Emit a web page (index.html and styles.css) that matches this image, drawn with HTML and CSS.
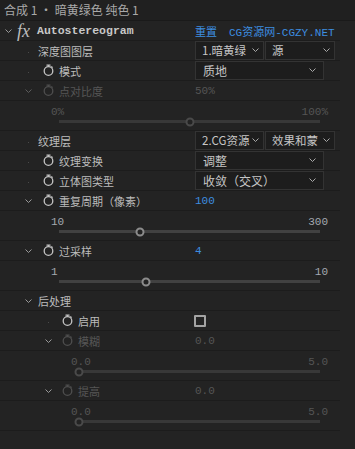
FILE: index.html
```html
<!DOCTYPE html>
<html>
<head>
<meta charset="utf-8">
<link rel="stylesheet" href="styles.css">
</head>
<body>
<div class="panel">
  <div class="header">合成 1 • 暗黄绿色 纯色 1</div>
  <div class="body">
    <div class="rows">
      <div class="row">
        <div class="label l0">
          <span class="tw"><svg width="7" height="4" viewBox="0 0 7 4"><path d="M0.5 0.5 L3.5 3.5 L6.5 0.5" fill="none" stroke="#9a9a9a" stroke-width="1"/></svg></span>
          <span class="fx">fx</span>
          <span class="effname">Autostereogram</span>
        </div>
        <div class="value">
          <span class="link">重置</span>
          <span class="link site">CG资源网-CGZY.NET</span>
        </div>
      </div>

      <div class="row">
        <div class="label l1">
          <span class="tw"><i class="dot"></i></span>
          <span class="txt ns">深度图图层</span>
        </div>
        <div class="value">
          <div class="dd half"><span class="ddt">1.暗黄绿</span><svg class="ddc" width="7" height="4" viewBox="0 0 7 4"><path d="M0.5 0.5 L3.5 3.5 L6.5 0.5" fill="none" stroke="#a8a8a8" stroke-width="1"/></svg></div>
          <div class="dd half"><span class="ddt">源</span><svg class="ddc" width="7" height="4" viewBox="0 0 7 4"><path d="M0.5 0.5 L3.5 3.5 L6.5 0.5" fill="none" stroke="#a8a8a8" stroke-width="1"/></svg></div>
        </div>
      </div>

      <div class="row">
        <div class="label l1">
          <span class="tw"><i class="dot"></i></span>
          <svg class="sw" width="11" height="12" viewBox="0 0 11 12"><circle cx="5.5" cy="7" r="4.3" fill="none" stroke="#c4c4c4" stroke-width="1.3"/><path d="M3.5 1.2 H7.5 M5.5 1.2 V2.6 M8.4 2.4 L9.6 3.6" fill="none" stroke="#c4c4c4" stroke-width="1.2"/></svg>
          <span class="txt">模式</span>
        </div>
        <div class="value">
          <div class="dd full"><span class="ddt">质地</span><svg class="ddc" width="7" height="4" viewBox="0 0 7 4"><path d="M0.5 0.5 L3.5 3.5 L6.5 0.5" fill="none" stroke="#a8a8a8" stroke-width="1"/></svg></div>
        </div>
      </div>

      <div class="row dis">
        <div class="label l1">
          <span class="tw"><svg width="7" height="4" viewBox="0 0 7 4"><path d="M0.5 0.5 L3.5 3.5 L6.5 0.5" fill="none" stroke="#5c5c5c" stroke-width="1"/></svg></span>
          <svg class="sw" width="11" height="12" viewBox="0 0 11 12"><circle cx="5.5" cy="7" r="4.3" fill="none" stroke="#4e4e4e" stroke-width="1.3"/><path d="M3.5 1.2 H7.5 M5.5 1.2 V2.6 M8.4 2.4 L9.6 3.6" fill="none" stroke="#4e4e4e" stroke-width="1.2"/></svg>
          <span class="txt">点对比度</span>
        </div>
        <div class="value"><span class="num">50%</span></div>
      </div>
      <div class="slider s1 dis">
        <div class="sl-labels"><span>0%</span><span>100%</span></div>
        <div class="track"><i class="knob" style="left:50%"></i></div>
      </div>

      <div class="row">
        <div class="label l1">
          <span class="tw"><i class="dot"></i></span>
          <span class="txt ns">纹理层</span>
        </div>
        <div class="value">
          <div class="dd half"><span class="ddt">2.CG资源</span><svg class="ddc" width="7" height="4" viewBox="0 0 7 4"><path d="M0.5 0.5 L3.5 3.5 L6.5 0.5" fill="none" stroke="#a8a8a8" stroke-width="1"/></svg></div>
          <div class="dd half"><span class="ddt">效果和蒙</span><svg class="ddc" width="7" height="4" viewBox="0 0 7 4"><path d="M0.5 0.5 L3.5 3.5 L6.5 0.5" fill="none" stroke="#a8a8a8" stroke-width="1"/></svg></div>
        </div>
      </div>

      <div class="row">
        <div class="label l1">
          <span class="tw"><i class="dot"></i></span>
          <svg class="sw" width="11" height="12" viewBox="0 0 11 12"><circle cx="5.5" cy="7" r="4.3" fill="none" stroke="#c4c4c4" stroke-width="1.3"/><path d="M3.5 1.2 H7.5 M5.5 1.2 V2.6 M8.4 2.4 L9.6 3.6" fill="none" stroke="#c4c4c4" stroke-width="1.2"/></svg>
          <span class="txt">纹理变换</span>
        </div>
        <div class="value">
          <div class="dd full"><span class="ddt">调整</span><svg class="ddc" width="7" height="4" viewBox="0 0 7 4"><path d="M0.5 0.5 L3.5 3.5 L6.5 0.5" fill="none" stroke="#a8a8a8" stroke-width="1"/></svg></div>
        </div>
      </div>

      <div class="row">
        <div class="label l1">
          <span class="tw"><i class="dot"></i></span>
          <svg class="sw" width="11" height="12" viewBox="0 0 11 12"><circle cx="5.5" cy="7" r="4.3" fill="none" stroke="#c4c4c4" stroke-width="1.3"/><path d="M3.5 1.2 H7.5 M5.5 1.2 V2.6 M8.4 2.4 L9.6 3.6" fill="none" stroke="#c4c4c4" stroke-width="1.2"/></svg>
          <span class="txt">立体图类型</span>
        </div>
        <div class="value">
          <div class="dd full"><span class="ddt">收敛（交叉）</span><svg class="ddc" width="7" height="4" viewBox="0 0 7 4"><path d="M0.5 0.5 L3.5 3.5 L6.5 0.5" fill="none" stroke="#a8a8a8" stroke-width="1"/></svg></div>
        </div>
      </div>

      <div class="row">
        <div class="label l1">
          <span class="tw"><svg width="7" height="4" viewBox="0 0 7 4"><path d="M0.5 0.5 L3.5 3.5 L6.5 0.5" fill="none" stroke="#9a9a9a" stroke-width="1"/></svg></span>
          <svg class="sw" width="11" height="12" viewBox="0 0 11 12"><circle cx="5.5" cy="7" r="4.3" fill="none" stroke="#c4c4c4" stroke-width="1.3"/><path d="M3.5 1.2 H7.5 M5.5 1.2 V2.6 M8.4 2.4 L9.6 3.6" fill="none" stroke="#c4c4c4" stroke-width="1.2"/></svg>
          <span class="txt">重复周期（像素）</span>
        </div>
        <div class="value"><span class="num blue">100</span></div>
      </div>
      <div class="slider s1">
        <div class="sl-labels"><span>10</span><span>300</span></div>
        <div class="track"><i class="knob" style="left:31%"></i></div>
      </div>

      <div class="row">
        <div class="label l1">
          <span class="tw"><svg width="7" height="4" viewBox="0 0 7 4"><path d="M0.5 0.5 L3.5 3.5 L6.5 0.5" fill="none" stroke="#9a9a9a" stroke-width="1"/></svg></span>
          <svg class="sw" width="11" height="12" viewBox="0 0 11 12"><circle cx="5.5" cy="7" r="4.3" fill="none" stroke="#c4c4c4" stroke-width="1.3"/><path d="M3.5 1.2 H7.5 M5.5 1.2 V2.6 M8.4 2.4 L9.6 3.6" fill="none" stroke="#c4c4c4" stroke-width="1.2"/></svg>
          <span class="txt">过采样</span>
        </div>
        <div class="value"><span class="num blue">4</span></div>
      </div>
      <div class="slider s1">
        <div class="sl-labels"><span>1</span><span>10</span></div>
        <div class="track"><i class="knob" style="left:33.3%"></i></div>
      </div>

      <div class="row">
        <div class="label l1">
          <span class="tw"><svg width="7" height="4" viewBox="0 0 7 4"><path d="M0.5 0.5 L3.5 3.5 L6.5 0.5" fill="none" stroke="#9a9a9a" stroke-width="1"/></svg></span>
          <span class="txt ns">后处理</span>
        </div>
        <div class="value"></div>
      </div>

      <div class="row">
        <div class="label l2">
          <span class="tw"><i class="dot"></i></span>
          <svg class="sw" width="11" height="12" viewBox="0 0 11 12"><circle cx="5.5" cy="7" r="4.3" fill="none" stroke="#c4c4c4" stroke-width="1.3"/><path d="M3.5 1.2 H7.5 M5.5 1.2 V2.6 M8.4 2.4 L9.6 3.6" fill="none" stroke="#c4c4c4" stroke-width="1.2"/></svg>
          <span class="txt">启用</span>
        </div>
        <div class="value"><span class="check"></span></div>
      </div>

      <div class="row dis">
        <div class="label l2">
          <span class="tw"><svg width="7" height="4" viewBox="0 0 7 4"><path d="M0.5 0.5 L3.5 3.5 L6.5 0.5" fill="none" stroke="#9a9a9a" stroke-width="1"/></svg></span>
          <svg class="sw" width="11" height="12" viewBox="0 0 11 12"><circle cx="5.5" cy="7" r="4.3" fill="none" stroke="#4e4e4e" stroke-width="1.3"/><path d="M3.5 1.2 H7.5 M5.5 1.2 V2.6 M8.4 2.4 L9.6 3.6" fill="none" stroke="#4e4e4e" stroke-width="1.2"/></svg>
          <span class="txt">模糊</span>
        </div>
        <div class="value"><span class="num">0.0</span></div>
      </div>
      <div class="slider s2 dis">
        <div class="sl-labels"><span>0.0</span><span>5.0</span></div>
        <div class="track"><i class="knob" style="left:0%"></i></div>
      </div>

      <div class="row dis">
        <div class="label l2">
          <span class="tw"><svg width="7" height="4" viewBox="0 0 7 4"><path d="M0.5 0.5 L3.5 3.5 L6.5 0.5" fill="none" stroke="#9a9a9a" stroke-width="1"/></svg></span>
          <svg class="sw" width="11" height="12" viewBox="0 0 11 12"><circle cx="5.5" cy="7" r="4.3" fill="none" stroke="#4e4e4e" stroke-width="1.3"/><path d="M3.5 1.2 H7.5 M5.5 1.2 V2.6 M8.4 2.4 L9.6 3.6" fill="none" stroke="#4e4e4e" stroke-width="1.2"/></svg>
          <span class="txt">提高</span>
        </div>
        <div class="value"><span class="num">0.0</span></div>
      </div>
      <div class="slider s2 dis">
        <div class="sl-labels"><span>0.0</span><span>5.0</span></div>
        <div class="track"><i class="knob" style="left:0%"></i></div>
      </div>
    </div>
    <div class="scroll"></div>
  </div>
</div>
</body>
</html>
```

FILE: styles.css
```css
html, body {
  margin: 0;
  padding: 0;
  background: #232323;
}
.panel {
  width: 355px;
  height: 449px;
  background: #232323;
  font-family: "Noto Sans CJK SC", "Liberation Sans", sans-serif;
  color: #b8b8b8;
  overflow: hidden;
  display: flex;
  flex-direction: column;
}
.header {
  height: 21px;
  box-sizing: border-box;
  border-bottom: 1px solid #1a1a1a;
  background: #202020;
  padding-left: 4px;
  font-size: 12px;
  line-height: 20px;
  color: #a9a9a9;
  white-space: nowrap;
}
.body {
  flex: 1;
  display: flex;
}
.rows {
  width: 340px;
  display: flex;
  flex-direction: column;
}
.scroll {
  flex: 1;
  background: #232323;
}
.row {
  height: 20px;
  box-sizing: border-box;
  border-bottom: 1px solid #1c1c1c;
  display: flex;
  align-items: center;
}
.label {
  width: 195px;
  box-sizing: border-box;
  flex: none;
  display: flex;
  align-items: center;
  height: 100%;
  white-space: nowrap;
}
.value {
  flex: 1;
  display: flex;
  align-items: center;
  height: 100%;
}
.tw {
  width: 10px;
  display: flex;
  align-items: center;
  justify-content: center;
  height: 100%;
  flex: none;
}
.dot {
  width: 1px;
  height: 1px;
  background: #4a4a4a;
  margin-top: 4px;
}
.l0 { padding-left: 3px; }
.l1 { padding-left: 23px; }
.l2 { padding-left: 43px; }
.sw { margin-left: 10px; flex: none; margin-top: -1px; }
.l2 .sw { margin-left: 9px; }
.txt {
  font-size: 11px;
  margin-left: 5px;
  color: #bcbcbc;
}
.txt.ns { margin-left: 5px; }
.fx {
  font-family: "Liberation Serif", serif;
  font-style: italic;
  font-size: 18px;
  color: #bdbdbd;
  margin-left: 4px;
  line-height: 18px;
}
.effname {
  font-family: "Liberation Mono", monospace;
  font-weight: bold;
  font-size: 11.5px;
  color: #c8c8c8;
  margin-left: 7px;
}
.link {
  color: #3d8ee0;
  font-size: 11px;
}
.link.site {
  margin-left: 12px;
  font-family: "Liberation Mono", "Noto Sans CJK SC", monospace;
  font-size: 11px;
}
.dd {
  height: 19px;
  margin-top: -1px;
  box-sizing: border-box;
  border: 1px solid #333;
  background: #1d1d1d;
  display: flex;
  align-items: center;
  padding-left: 6px;
  padding-right: 4px;
  font-size: 12px;
  color: #c6c6c6;
  white-space: nowrap;
  overflow: hidden;
  flex: none;
}
.ddt {
  flex: 1;
  min-width: 0;
  overflow: hidden;
}
.dd.half { width: 70px; margin-right: 1px; font-size: 11.5px; }
.dd.half:first-child { width: 69px; }
.dd.full { width: 129px; padding-left: 7px; padding-right: 7px; }
.ddc { flex: none; padding-left: 2px; }
.num {
  font-family: "Liberation Mono", monospace;
  font-size: 11px;
  color: #a3a9b0;
}
.num.blue { color: #3d8ee0; }
.row.dis .txt { color: #565656; }
.row.dis .num { color: #555; }
.check {
  width: 12px;
  height: 12px;
  box-sizing: border-box;
  border: 2px solid #a3a3a3;
  border-radius: 1px;
  margin-left: -1px;
}
.slider {
  height: 30px;
  box-sizing: border-box;
  border-bottom: 1px solid #1c1c1c;
  padding-right: 12px;
  padding-top: 4px;
}
.slider.s1 { padding-left: 51px; }
.slider.s2 { padding-left: 71px; }
.sl-labels {
  display: flex;
  justify-content: space-between;
  height: 14px;
  line-height: 14px;
  font-family: "Liberation Mono", monospace;
  font-size: 11px;
  color: #a3a9b0;
}
.slider.dis .sl-labels { color: #555; }
.track {
  margin: 1px 8px 0 8px;
  height: 3px;
  background: #414141;
  position: relative;
}
.knob {
  position: absolute;
  top: 50%;
  width: 9px;
  height: 9px;
  box-sizing: border-box;
  border: 2px solid #8c8c8c;
  border-radius: 50%;
  background: #232323;
  transform: translate(-50%, -50%);
}
.slider.dis .knob { border-color: #4a4a4a; }
.slider.dis .track { background: #383838; }
```
